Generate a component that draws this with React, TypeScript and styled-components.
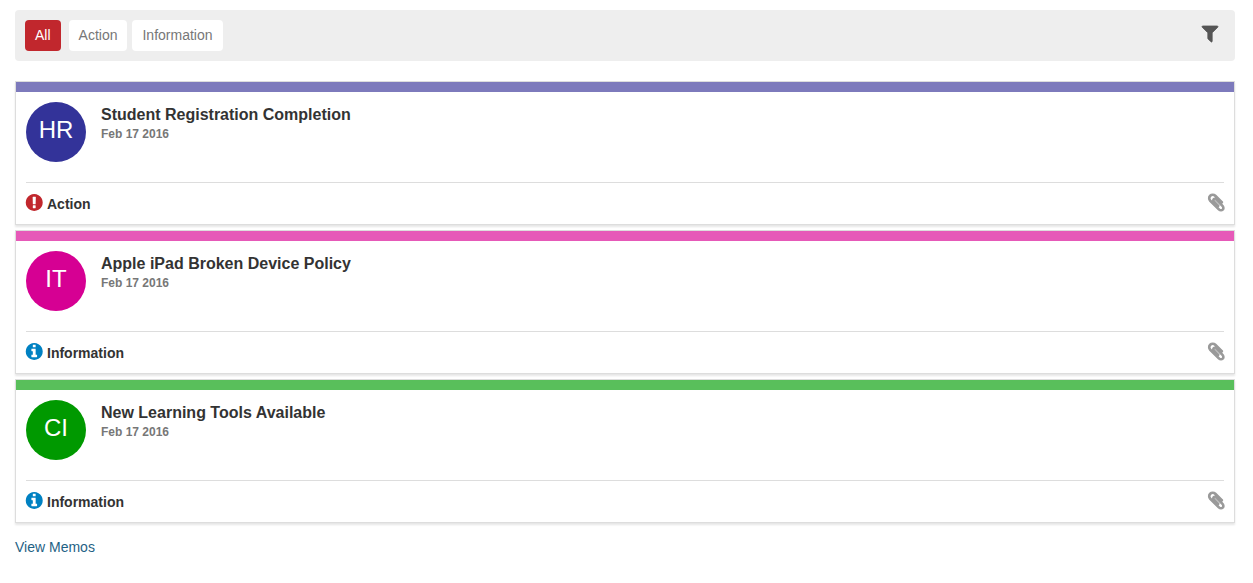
import React, { useState } from "react";
import styled, { createGlobalStyle } from "styled-components";

const GlobalStyle = createGlobalStyle`
  *, *::before, *::after { box-sizing: border-box; }
  body {
    margin: 0;
    background: #fff;
    color: #333;
    font: 14px/20px "Liberation Sans", Arial, Helvetica, sans-serif;
  }
`;

const Page = styled.main`
  padding: 10px 18px 20px 15px;
`;

const Toolbar = styled.div`
  display: flex;
  align-items: center;
  justify-content: space-between;
  padding: 10px 17px 10px 10px;
  border-radius: 4px;
  background: #eee;
`;

const Filters = styled.div`
  display: flex;
  gap: 5px;
`;

const FilterButton = styled.button<{ $active: boolean }>`
  height: 31px;
  padding: 0 10px 2px;
  border: 0;
  border-radius: 4px;
  background: ${(p) => (p.$active ? "#c1272d" : "#fff")};
  color: ${(p) => (p.$active ? "#fff" : "#777")};
  font: inherit;
  cursor: pointer;

  &:first-child {
    margin-right: 3px;
  }
`;

const IconButton = styled.button`
  display: flex;
  padding: 0 0 3px;
  border: 0;
  background: none;
  color: #555;
  cursor: pointer;
`;

const MemoList = styled.div`
  display: flex;
  flex-direction: column;
  gap: 5px;
  margin: 20px 0 14px;
`;

const Card = styled.article`
  border: 1px solid #ddd;
  background: #fff;
  box-shadow: 0 2px 2px rgba(0, 0, 0, 0.1);
`;

const Stripe = styled.div<{ $color: string }>`
  height: 10px;
  background: ${(p) => p.$color};
`;

const CardHead = styled.div`
  display: flex;
  gap: 15px;
  margin: 0 10px;
  padding: 10px 0 20px;
  border-bottom: 1px solid #ddd;
`;

const Avatar = styled.div<{ $color: string }>`
  flex: none;
  width: 60px;
  height: 60px;
  border-radius: 50%;
  background: ${(p) => p.$color};
  color: #fff;
  font-size: 24px;
  line-height: 56px;
  text-align: center;
`;

const Title = styled.h2`
  margin: 3px 0 0;
  font-size: 16px;
  line-height: 20px;
`;

const MemoDate = styled.time`
  display: block;
  color: #777;
  font-size: 12px;
  font-weight: bold;
  line-height: 18px;
`;

const CardFoot = styled.div`
  display: flex;
  align-items: flex-start;
  justify-content: space-between;
  height: 41px;
  padding: 11px 10px 0;
  color: #999;
`;

const Kind = styled.div`
  display: flex;
  gap: 4px;
  color: #333;
  font-weight: bold;
`;

const Glyph = styled.svg<{ $color?: string }>`
  display: block;
  flex: none;
  overflow: visible;
  fill: ${(p) => p.$color ?? "currentColor"};
`;

const ViewLink = styled.a`
  color: #1f6285;
  text-decoration: none;
`;

const FilterIcon = () => (
  <Glyph width="16" height="16" viewBox="192 256 1408 1408" aria-hidden="true">
    <path
      stroke="currentColor"
      strokeWidth="70"
      d="M1595 295q17 41-14 70l-493 493v742q0 42-39 59-13 5-25 5-27 0-45-19l-256-256q-19-19-19-45v-486l-493-493q-31-29-14-70 17-39 59-39h1280q42 0 59 39z"
    />
  </Glyph>
);

const ActionIcon = () => (
  <Glyph $color="#c1272d" width="17" height="17" viewBox="152 128 1536 1536" aria-hidden="true">
    <path d="M896 128q209 0 385.5 103t279.5 279.5 103 385.5-103 385.5-279.5 279.5-385.5 103-385.5-103-279.5-279.5-103-385.5 103-385.5 279.5-279.5 385.5-103zm128 1247v-190q0-14-9-23.5t-22-9.5h-192q-13 0-23 10t-10 23v190q0 13 10 23t23 10h192q13 0 22-9.5t9-23.5zm-2-344l18-621q0-12-10-18-10-8-24-8h-220q-14 0-24 8-10 6-10 18l17 621q0 10 10 17.5t24 7.5h185q14 0 23.5-7.5t10.5-17.5z" />
  </Glyph>
);

const InfoIcon = () => (
  <Glyph $color="#0081c2" width="17" height="17" viewBox="152 128 1536 1536" aria-hidden="true">
    <path d="M1152 1376v-160q0-14-9-23t-23-9h-96v-512q0-14-9-23t-23-9h-320q-14 0-23 9t-9 23v160q0 14 9 23t23 9h96v320h-96q-14 0-23 9t-9 23v160q0 14 9 23t23 9h448q14 0 23-9t9-23zm-128-896v-160q0-14-9-23t-23-9h-192q-14 0-23 9t-9 23v160q0 14 9 23t23 9h192q14 0 23-9t9-23zm640 416q0 209-103 385.5t-279.5 279.5-385.5 103-385.5-103-279.5-279.5-103-385.5 103-385.5 279.5-279.5 385.5-103 385.5 103 279.5 279.5 103 385.5z" />
  </Glyph>
);

const ClipIcon = () => (
  <Glyph width="16" height="17" viewBox="170 132 1400 1528" role="img" aria-label="Has attachment">
    <path
      stroke="currentColor"
      strokeWidth="110"
      d="M1596 1385q0 117-79 196t-196 79q-135 0-235-100l-777-776q-113-115-113-271 0-159 110-270t269-111q158 0 273 113l605 606q10 10 10 22 0 16-30.5 46.5t-46.5 30.5q-13 0-23-10l-606-607q-79-77-181-77-106 0-179 75t-73 181q0 105 76 181l776 777q63 63 145 63 64 0 106-42t42-106q0-82-63-145l-581-581q-26-24-60-24-29 0-48 19t-19 48q0 32 25 59l410 410q10 10 10 22 0 16-31 47t-47 31q-12 0-22-10l-410-410q-63-61-63-149 0-82 57-139t139-57q88 0 149 63l581 581q100 98 100 235z"
    />
  </Glyph>
);

type KindName = "Action" | "Information";

interface Memo {
  initials: string;
  title: string;
  date: string;
  kind: KindName;
  color: string;
  stripe: string;
}

const memos: Memo[] = [
  { initials: "HR", title: "Student Registration Completion", date: "Feb 17 2016", kind: "Action", color: "#333399", stripe: "#7d7abc" },
  { initials: "IT", title: "Apple iPad Broken Device Policy", date: "Feb 17 2016", kind: "Information", color: "#d60093", stripe: "#e659b8" },
  { initials: "CI", title: "New Learning Tools Available", date: "Feb 17 2016", kind: "Information", color: "#009900", stripe: "#59bf5b" },
];

const filters: ("All" | KindName)[] = ["All", "Action", "Information"];

export default function App() {
  const [active, setActive] = useState<"All" | KindName>("All");
  const shown = memos.filter((m) => active === "All" || m.kind === active);

  return (
    <Page>
      <GlobalStyle />
      <Toolbar>
        <Filters>
          {filters.map((f) => (
            <FilterButton key={f} type="button" $active={f === active} aria-pressed={f === active} onClick={() => setActive(f)}>
              {f}
            </FilterButton>
          ))}
        </Filters>
        <IconButton type="button" aria-label="Filter">
          <FilterIcon />
        </IconButton>
      </Toolbar>
      <MemoList>
        {shown.map((m) => (
          <Card key={m.title}>
            <Stripe $color={m.stripe} />
            <CardHead>
              <Avatar $color={m.color}>{m.initials}</Avatar>
              <div>
                <Title>{m.title}</Title>
                <MemoDate dateTime="2016-02-17">{m.date}</MemoDate>
              </div>
            </CardHead>
            <CardFoot>
              <Kind>
                {m.kind === "Action" ? <ActionIcon /> : <InfoIcon />}
                {m.kind}
              </Kind>
              <ClipIcon />
            </CardFoot>
          </Card>
        ))}
      </MemoList>
      <ViewLink href="#memos">View Memos</ViewLink>
    </Page>
  );
}
